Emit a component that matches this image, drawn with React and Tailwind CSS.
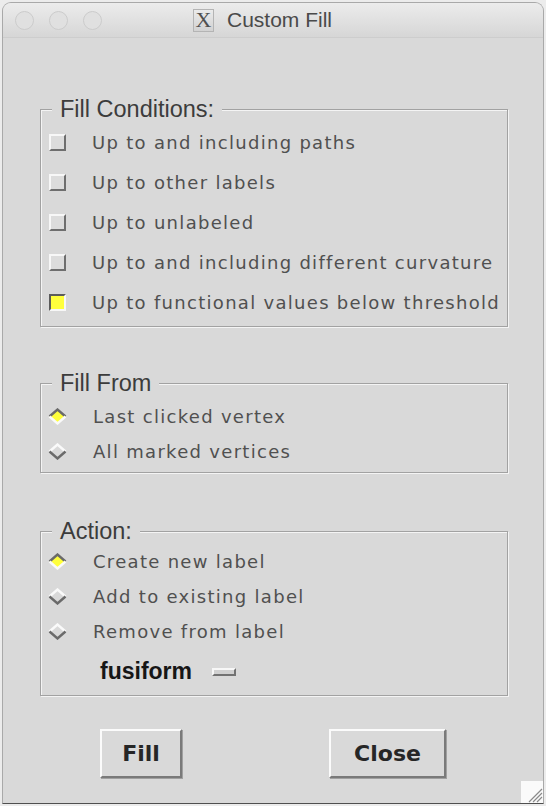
import { useState } from "react";

const conditions = [
  "Up to and including paths",
  "Up to other labels",
  "Up to unlabeled",
  "Up to and including different curvature",
  "Up to functional values below threshold",
];

const Check = ({ on }) =>
  on ? (
    <div className="w-[17px] h-[17px] shrink-0 border-2 border-t-[#5c5c5c] border-l-[#5c5c5c] border-r-[#f7f7f7] border-b-[#f7f7f7] bg-[#ffff3c]" />
  ) : (
    <div className="w-[17px] h-[17px] shrink-0 border-2 border-t-[#f7f7f7] border-l-[#f7f7f7] border-r-[#6e6e6e] border-b-[#6e6e6e] bg-[#dcdcdc]" />
  );

const Diamond = ({ on }) => (
  <svg width="19" height="17" viewBox="0 0 19 17" className="shrink-0">
    <polygon points="9.5,1.5 17.5,8.5 9.5,15.5 1.5,8.5" fill={on ? "#ffff3c" : "#d9d9d9"} />
    <path d="M1.5 8.5 L9.5 1.5 L17.5 8.5" fill="none" stroke={on ? "#6a6a6a" : "#fafafa"} strokeWidth="2.4" />
    <path d="M1.5 8.5 L9.5 15.5 L17.5 8.5" fill="none" stroke={on ? "#fafafa" : "#6a6a6a"} strokeWidth="2.4" />
  </svg>
);

const Group = ({ title, children, className }) => (
  <fieldset
    className={`w-[468px] border border-[#a2a2a2] shadow-[1px_1px_0_#f4f4f4,inset_1px_1px_0_#f4f4f4] ${className}`}
  >
    <legend className="ml-[11px] px-[8px] h-[26px] leading-[26px] bg-[#d9d9d9] text-[23.5px] text-[#3c3c3c] font-['Liberation_Sans',Arial,sans-serif]">
      {title}
    </legend>
    {children}
  </fieldset>
);

const rowText = "font-['DejaVu_Sans',sans-serif] text-[18px] tracking-[1.3px] text-[#505050] whitespace-nowrap";

export default function App() {
  const [checked, setChecked] = useState([false, false, false, false, true]);
  const [from, setFrom] = useState(0);
  const [action, setAction] = useState(0);

  return (
    <div className="w-[546px] h-[806px] bg-[#ececec] pt-[2px] pl-[2px]">
      <div className="relative w-[542px] h-[802px] rounded-t-[9px] border border-[#a9a9a9] border-b-[#4f4f4f] bg-[#d9d9d9] flex flex-col overflow-hidden">
        {/* title bar */}
        <div className="h-[35px] shrink-0 flex items-center pl-[12px] bg-gradient-to-b from-[#ececec] to-[#d6d6d6] border-b border-[#cdcdcd]">
          <div className="flex gap-[15px]">
            <div className="w-[19px] h-[19px] rounded-full bg-[#e0e0e0] border border-[#cbcbcb]" />
            <div className="w-[19px] h-[19px] rounded-full bg-[#e0e0e0] border border-[#cbcbcb]" />
            <div className="w-[19px] h-[19px] rounded-full bg-[#e0e0e0] border border-[#cbcbcb]" />
          </div>
          <div className="ml-[91px] flex items-center gap-[13px]">
            <div className="w-[21px] h-[23px] flex items-center justify-center border border-[#b4b4b4] bg-gradient-to-b from-[#ebebeb] to-[#d2d2d2] text-[22px] leading-none text-[#505050] font-['Liberation_Serif',serif]">
              X
            </div>
            <span className="text-[21px] text-[#4a4a4a] font-['Liberation_Sans',Arial,sans-serif]">Custom Fill</span>
          </div>
        </div>

        {/* body */}
        <div className="flex flex-col pl-[37px]">
          <Group title="Fill Conditions:" className="mt-[58px] pb-[4px]">
            {conditions.map((c, i) => (
              <div
                key={c}
                className="h-[40px] flex items-center pl-[8px] cursor-default"
                onClick={() => setChecked(checked.map((v, j) => (j === i ? !v : v)))}
              >
                <Check on={checked[i]} />
                <span className={`ml-[26px] ${rowText}`}>{c}</span>
              </div>
            ))}
          </Group>

          <Group title="Fill From" className="mt-[43px] pt-[3px] pb-[3px]">
            {["Last clicked vertex", "All marked vertices"].map((c, i) => (
              <div key={c} className="h-[35px] flex items-center pl-[7px]" onClick={() => setFrom(i)}>
                <Diamond on={from === i} />
                <span className={`ml-[26px] ${rowText}`}>{c}</span>
              </div>
            ))}
          </Group>

          <Group title="Action:" className="mt-[45px] pb-[1px]">
            {["Create new label", "Add to existing label", "Remove from label"].map((c, i) => (
              <div key={c} className="h-[35px] flex items-center pl-[7px]" onClick={() => setAction(i)}>
                <Diamond on={action === i} />
                <span className={`ml-[26px] ${rowText}`}>{c}</span>
              </div>
            ))}
            <div className="h-[45px] flex items-center pl-[59px]">
              <span className="text-[23px] font-bold text-[#161616] font-['Liberation_Sans',Arial,sans-serif]">fusiform</span>
              <div className="ml-[20px] w-[24px] h-[8px] border-2 border-t-[#f7f7f7] border-l-[#f7f7f7] border-r-[#727272] border-b-[#727272] bg-[#d0d0d0]" />
            </div>
          </Group>
        </div>

        {/* buttons */}
        <div className="mt-[33px] flex pl-[97px] gap-[147px]">
          <button className="w-[82px] h-[49px] border-2 border-t-[#fbfbfb] border-l-[#fbfbfb] border-r-[#7a7a7a] border-b-[#7a7a7a] shadow-[1px_1px_0_#a0a0a0] bg-[#d9d9d9] text-[22px] font-bold text-[#262626] font-['DejaVu_Sans',sans-serif]">
            Fill
          </button>
          <button className="w-[117px] h-[49px] border-2 border-t-[#fbfbfb] border-l-[#fbfbfb] border-r-[#7a7a7a] border-b-[#7a7a7a] shadow-[1px_1px_0_#a0a0a0] bg-[#d9d9d9] text-[22px] font-bold text-[#262626] font-['DejaVu_Sans',sans-serif]">
            Close
          </button>
        </div>

        {/* resize grip */}
        <svg width="22" height="22" viewBox="0 0 22 22" className="absolute right-0 bottom-0">
          <rect width="22" height="22" fill="#fafafa" />
          <path d="M8 21 L21 8 M12 21 L21 12 M16 21 L21 16" stroke="#8a8a8a" strokeWidth="1.2" />
        </svg>
      </div>
    </div>
  );
}
